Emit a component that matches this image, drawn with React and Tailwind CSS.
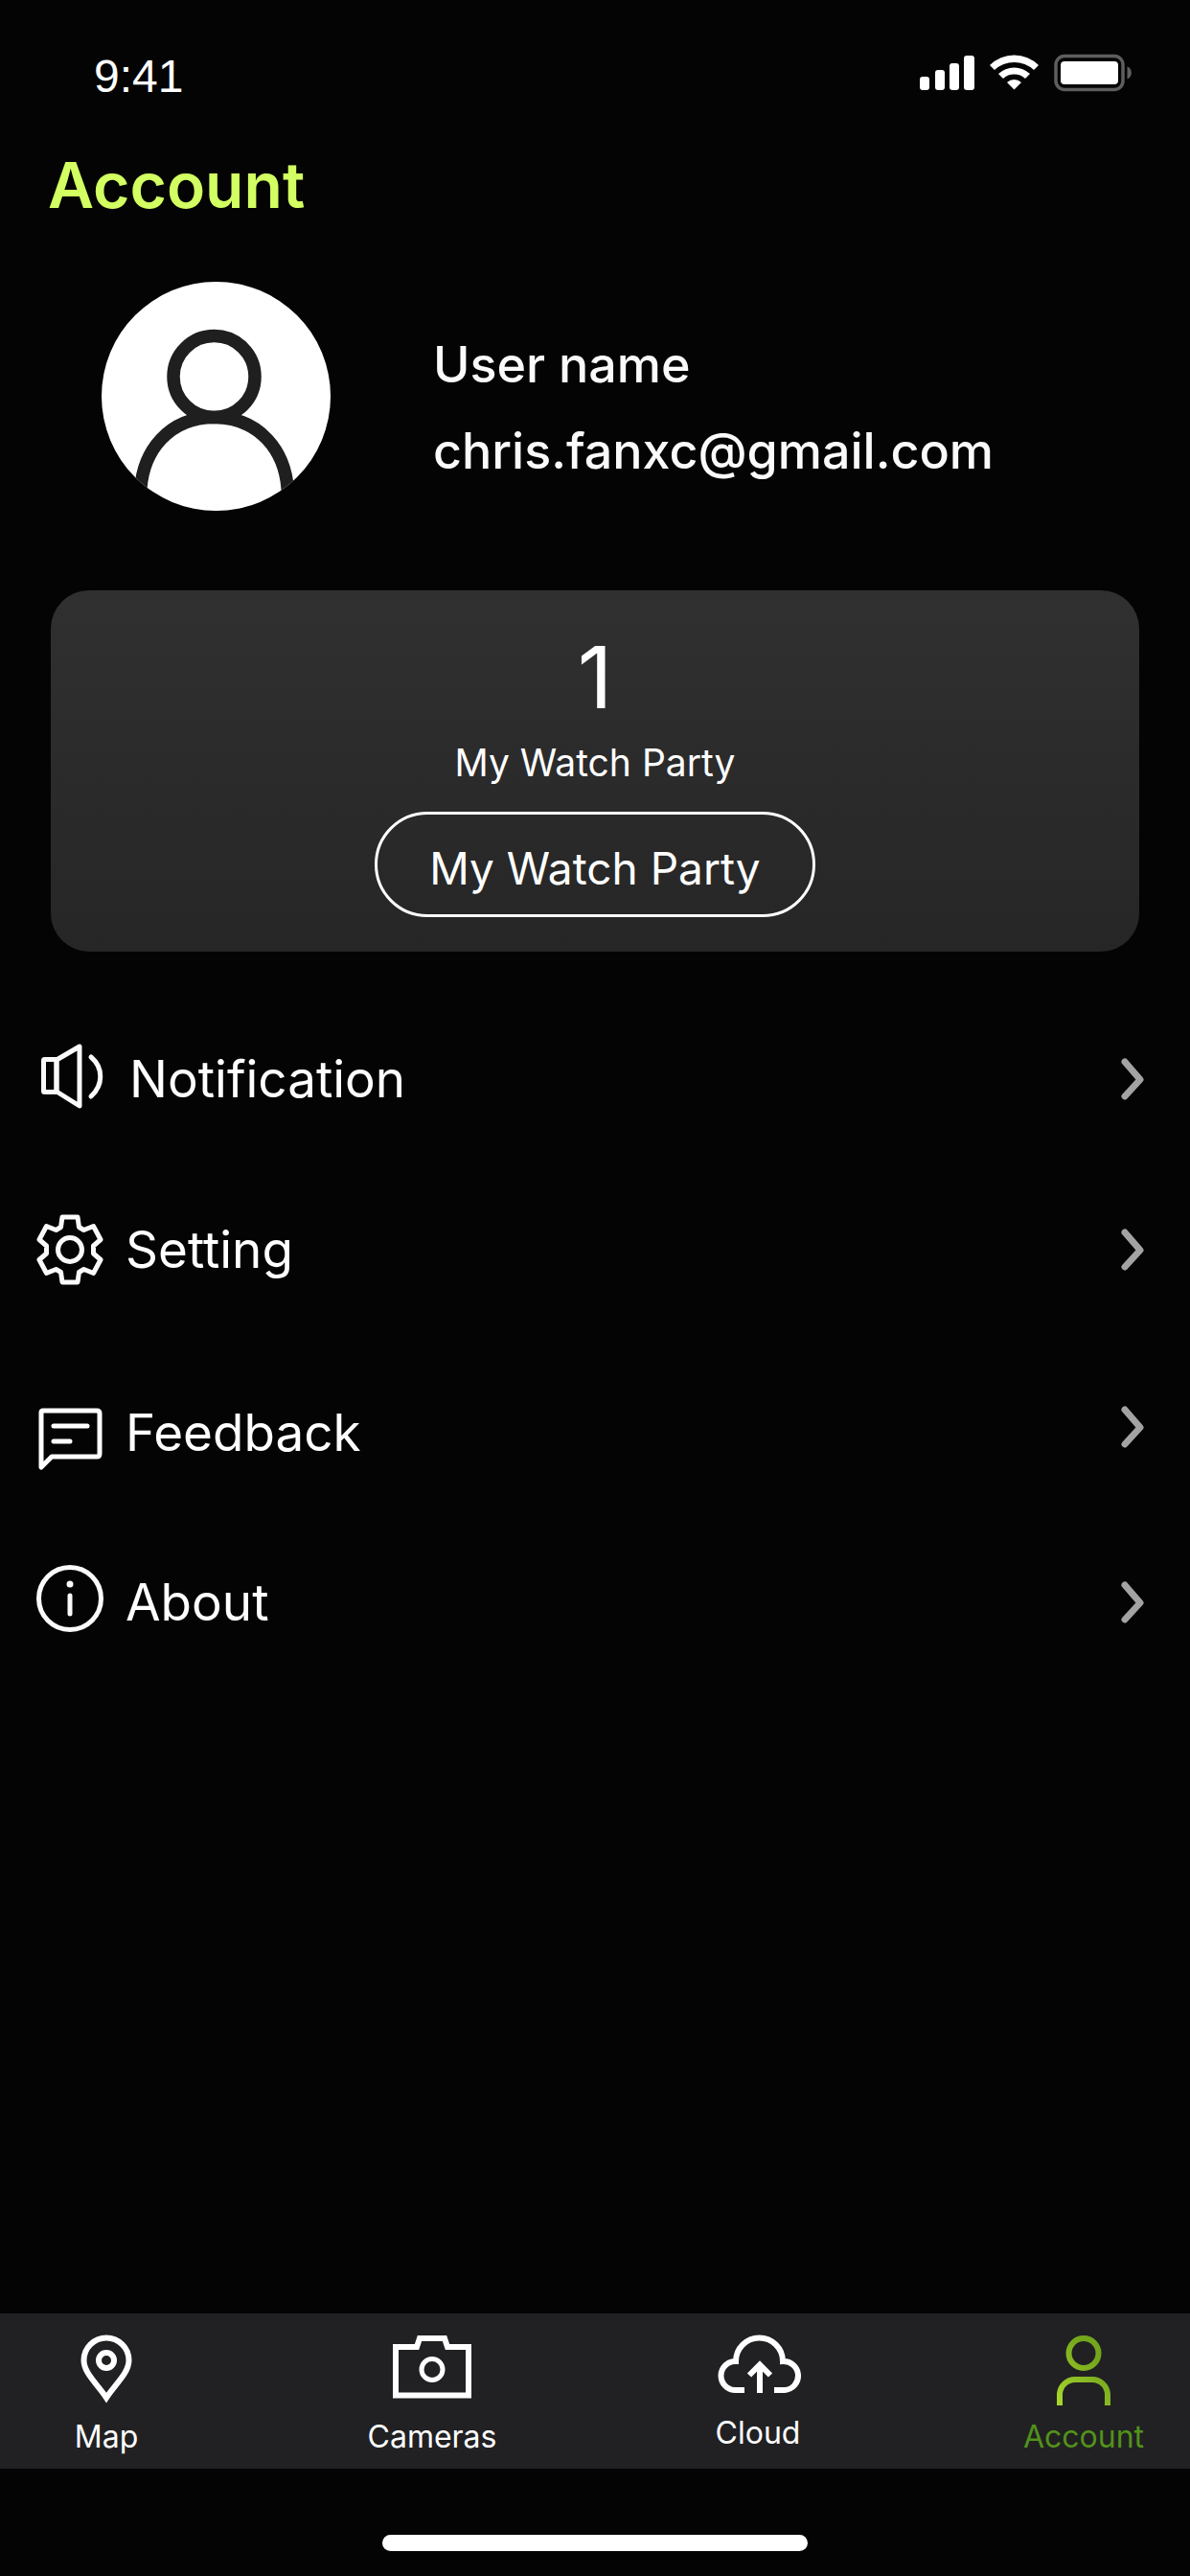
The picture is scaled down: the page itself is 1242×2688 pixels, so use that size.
import React from "react";

const StatusIcons = () => (
  <svg width="222" height="40" viewBox="0 0 222 40" fill="#fff" aria-hidden="true">
    <rect x="0" y="24" width="10" height="14" rx="3" />
    <rect x="16" y="17" width="10" height="21" rx="3" />
    <rect x="31" y="10" width="10" height="28" rx="3" />
    <rect x="46" y="2" width="11" height="36" rx="3" />
    <path d="M73 12 A36 36 0 0 1 124 12 L119 17 A30 30 0 0 0 78 17 Z" />
    <path d="M82 21 A24 24 0 0 1 115 21 L110 26 A17 17 0 0 0 87 26 Z" />
    <path d="M91 30 A11 11 0 0 1 106 30 L98.500 37.500 Z" />
    <rect x="142" y="2.500" width="70" height="35" rx="9" fill="none" stroke="#5e5e5e" strokeWidth="3.500" />
    <rect x="147" y="8" width="60" height="24" rx="4" />
    <path d="M216.500 13.500 A7 7 0 0 1 216.500 26.500 Z" fill="#5e5e5e" />
  </svg>
);

const SpeakerIcon = () => (
  <svg width="72" height="74" viewBox="0 0 72 74" fill="none" stroke="#fafafa" strokeWidth="5" strokeLinecap="round" strokeLinejoin="round">
    <rect x="9.500" y="16.500" width="13.500" height="34" rx="1" />
    <path d="M23 17 L47 3 V65 L23 50 Z" />
    <path d="M59 14 C72 25 72 43 59 55" />
  </svg>
);

const GearIcon = () => (
  <svg width="72" height="74" viewBox="0 0 72 74" fill="none" stroke="#fafafa" strokeWidth="5" strokeLinejoin="round">
    <circle cx="37" cy="37" r="12.500" />
    <path d="M29 3 H45 L46.500 13.500 L51.500 16.500 L61.500 12.500 L69 26.500 L61.500 33 V41 L69 47.500 L61.500 61.500 L51.500 57.500 L46.500 60.500 L45 71 H29 L27.500 60.500 L22.500 57.500 L12.500 61.500 L5 47.500 L12.500 41 V33 L5 26.500 L12.500 12.500 L22.500 16.500 L27.500 13.500 Z" />
  </svg>
);

const FeedbackIcon = () => (
  <svg width="72" height="88" viewBox="0 0 72 88" fill="none" stroke="#fff" strokeWidth="5" strokeLinecap="round" strokeLinejoin="round">
    <path d="M9 21 H65 Q68 21 68 24 V66 Q68 69 65 69 H18 L7 80 V23 Q7 21 9 21 Z" />
    <path d="M20 37 H55 M20 53 H37" />
  </svg>
);

const InfoIcon = () => (
  <svg width="72" height="82" viewBox="0 0 72 82" fill="none" stroke="#fafafa" strokeWidth="5" strokeLinecap="round">
    <circle cx="37" cy="37" r="32.500" />
    <circle cx="37" cy="22" r="3.500" fill="#fafafa" stroke="none" />
    <path d="M37 34 V53" />
  </svg>
);

const Chevron = () => (
  <svg width="24" height="44" viewBox="0 0 24 44" fill="none" stroke="#a3a3a3" strokeWidth="7" strokeLinecap="round" strokeLinejoin="round">
    <path d="M4 4 L20 22.500 L4 40" />
  </svg>
);

const PinIcon = () => (
  <svg width="96" height="76" viewBox="0 0 96 76" fill="none" stroke="#fff" strokeWidth="6">
    <path d="M48 66 C38 51 24.500 40 24.500 27 A23.500 23.500 0 0 1 71.500 27 C71.500 40 58 51 48 66 Z" />
    <circle cx="48" cy="27" r="8" />
  </svg>
);

const CameraIcon = () => (
  <svg width="96" height="76" viewBox="0 0 96 76" fill="none" stroke="#fff" strokeWidth="6">
    <path d="M10 13 H32 L35 4 H61 L64 13 H86 V63.500 H10 Z" />
    <circle cx="48" cy="36.500" r="11" strokeWidth="5" />
  </svg>
);

const CloudIcon = () => (
  <svg width="96" height="76" viewBox="0 0 96 76" fill="none" stroke="#fff" strokeWidth="6">
    <path d="M34 58 H24 A15 15 0 0 1 25 28 A24.500 24.500 0 0 1 74 28 A15 15 0 0 1 76 58 H65" />
    <path d="M50 61 V32 M39 42.500 L50 31.500 L61 42.500" />
  </svg>
);

const PersonIcon = () => (
  <svg width="96" height="76" viewBox="0 0 96 76" fill="none" stroke="url(#personGreen)" strokeWidth="6">
    <defs>
      <linearGradient id="personGreen" gradientUnits="userSpaceOnUse" x1="20" y1="70" x2="66" y2="30">
        <stop offset="0" stopColor="#a8d62c" />
        <stop offset="1" stopColor="#73a61c" />
      </linearGradient>
    </defs>
    <circle cx="48" cy="19.500" r="15.500" />
    <path d="M23 74 V62 A16 16 0 0 1 39 47 H57 A16 16 0 0 1 73 62 V74" />
  </svg>
);

const MENU = [
  { label: "Notification", icon: SpeakerIcon, row: "h-[176px]", inner: "gap-[27px]" },
  { label: "Setting", icon: GearIcon, row: "h-[180px]", inner: "gap-[23px]" },
  { label: "Feedback", icon: FeedbackIcon, row: "h-[190px]", inner: "gap-[23px] pt-3" },
  { label: "About", icon: InfoIcon, row: "h-[176px]", inner: "gap-[23px]" },
];

const TABS = [
  { label: "Map", icon: PinIcon, gap: "gap-[11px]" },
  { label: "Cameras", icon: CameraIcon, gap: "gap-[11px]" },
  { label: "Cloud", icon: CloudIcon, gap: "gap-[7px]" },
  { label: "Account", icon: PersonIcon, gap: "gap-[11px]", active: true },
];

export default function App() {
  return (
    <div className="flex min-h-screen flex-col bg-[#040404] font-['Inter',sans-serif] text-white">
      <header className="flex h-[116px] items-end justify-between pr-[60px] pl-[98px]">
        <span className="pb-2 font-['Liberation_Sans',sans-serif] text-[48px] leading-[56px]">9:41</span>
        <div className="pb-5">
          <StatusIcons />
        </div>
      </header>

      <main className="flex flex-1 flex-col">
        <h1 className="mt-[37px] pl-[50px] text-[66px] leading-[80px] font-semibold text-[#d2ff61]">Account</h1>

        <section className="mt-[61px] flex items-center gap-[107px] pl-[106px]">
          <svg width="239" height="239" viewBox="0 0 239 239" role="img" aria-label="User avatar">
            <clipPath id="avatarClip">
              <circle cx="119.500" cy="119.500" r="119.500" />
            </clipPath>
            <g clipPath="url(#avatarClip)">
              <rect width="239" height="239" fill="#fff" />
              <g fill="none" stroke="#1f1f1f" strokeWidth="13.500">
                <circle cx="117.500" cy="99" r="42.500" />
                <path d="M40.500 225 C40.500 175 72 141.500 117.500 141.500 S194.500 175 194.500 225" />
              </g>
            </g>
          </svg>
          <div className="pt-6 text-[52px] leading-[90px] font-medium text-[#fafafa]">
            <p>User name</p>
            <p>chris.fanxc@gmail.com</p>
          </div>
        </section>

        <section className="mx-[53px] mt-[83px] flex h-[377px] flex-col items-center rounded-[40px] bg-linear-to-b from-[#303030] to-[#262626] pt-[36px]">
          <p className="text-[90px] leading-[110px]">1</p>
          <p className="mt-[10px] text-[39px] leading-[48px]">My Watch Party</p>
          <button className="mt-[27px] h-[110px] rounded-full border-3 border-white px-[54px] pt-2 text-[46px] leading-[56px]">
            My Watch Party
          </button>
        </section>

        <ul className="mt-[45px]">
          {MENU.map(({ label, icon: Icon, row, inner }) => (
            <li key={label}>
              <button className={`flex w-full items-center justify-between pr-12 pl-9 text-left ${row}`}>
                <span className={`flex items-center ${inner}`}>
                  <Icon />
                  <span className="text-[53px] leading-[64px]">{label}</span>
                </span>
                <Chevron />
              </button>
            </li>
          ))}
        </ul>
      </main>

      <nav className="flex h-[162px] justify-between bg-[#212123] px-[31px] pt-[22px]">
        {TABS.map(({ label, icon: Icon, gap, active }) => (
          <a
            key={label}
            href={`#${label.toLowerCase()}`}
            aria-current={active ? "page" : undefined}
            className={`flex w-40 flex-col items-center ${gap} ${active ? "text-[#52921a]" : "text-white"}`}
          >
            <Icon />
            <span className="text-[32px] leading-[40px]">{label}</span>
          </a>
        ))}
      </nav>

      <footer className="flex h-28 items-end justify-center pb-[26px]">
        <div className="h-[17px] w-[444px] rounded-full bg-white" />
      </footer>
    </div>
  );
}
